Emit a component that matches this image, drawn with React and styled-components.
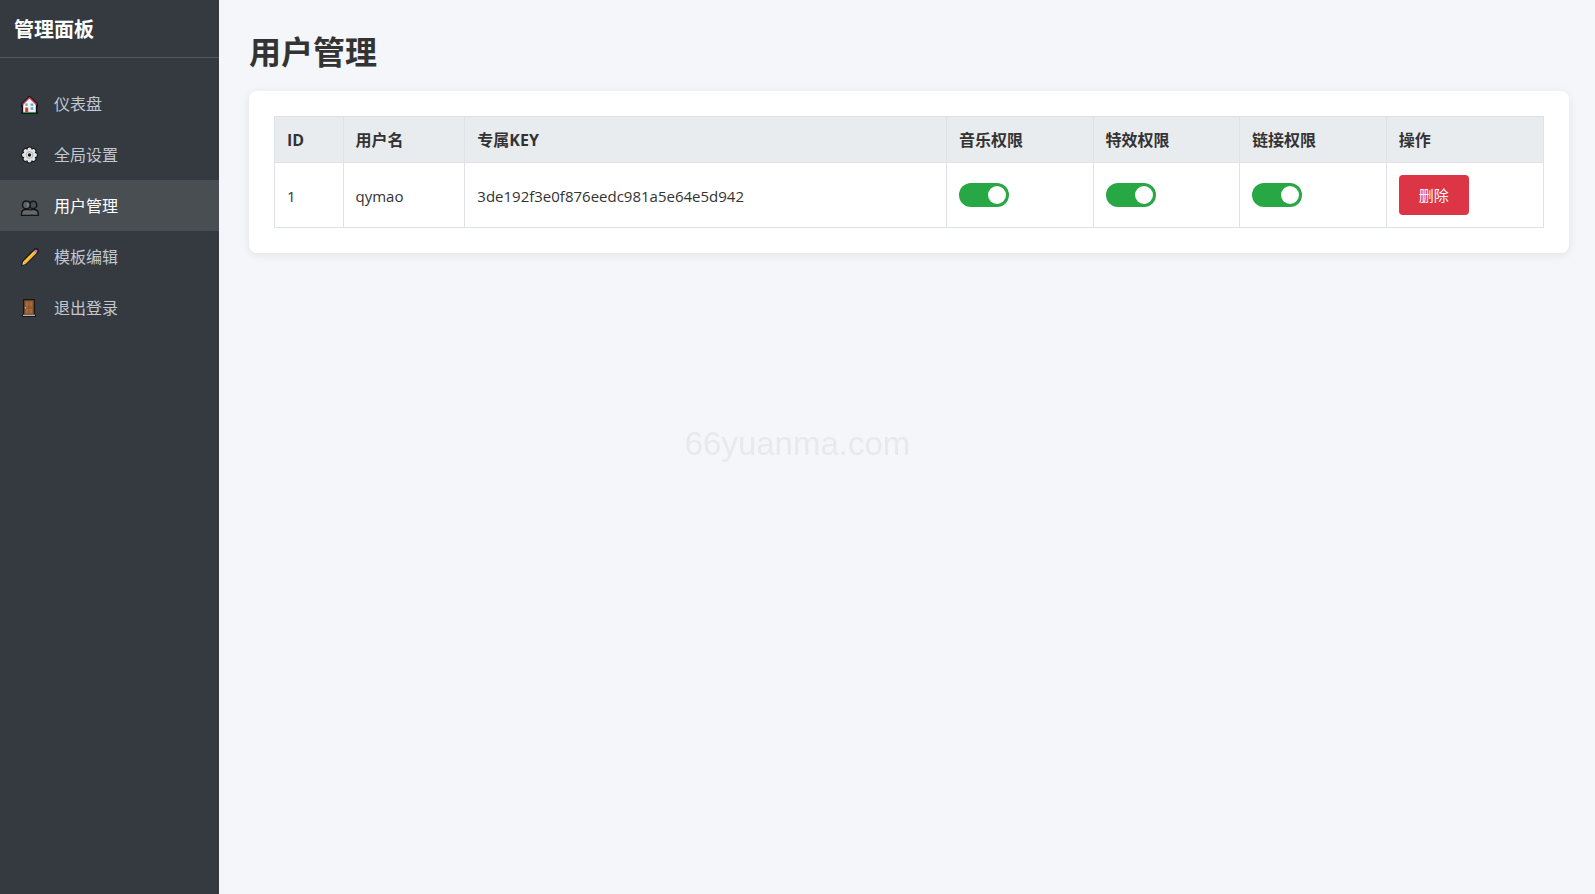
import React, { useState } from "react";
import styled, { createGlobalStyle } from "styled-components";

const NAV_ITEMS = [
  { id: "dashboard", label: "仪表盘", icon: HouseIcon },
  { id: "settings", label: "全局设置", icon: GearIcon },
  { id: "users", label: "用户管理", icon: UsersIcon },
  { id: "templates", label: "模板编辑", icon: PencilIcon },
  { id: "logout", label: "退出登录", icon: DoorIcon },
];

const PERMISSIONS = [
  { key: "music", label: "音乐权限" },
  { key: "effects", label: "特效权限" },
  { key: "links", label: "链接权限" },
];

const USERS = [
  {
    id: 1,
    name: "qymao",
    key: "3de192f3e0f876eedc981a5e64e5d942",
    music: true,
    effects: true,
    links: true,
  },
];

function App() {
  return (
    <>
      <GlobalStyle />
      <Page>
        <Sidebar active="users" />
        <Main>
          <Title>用户管理</Title>
          <Card>
            <UserTable users={USERS} />
          </Card>
        </Main>
        <Watermark>66yuanma.com</Watermark>
      </Page>
    </>
  );
}

function Sidebar(props) {
  const { active } = props;

  return (
    <Aside>
      <Brand>管理面板</Brand>
      <Nav>
        {NAV_ITEMS.map(({ id, label, icon: Icon }) => (
          <NavLink key={id} href={`#${id}`} $active={id === active}>
            <Icon />
            <NavLabel>{label}</NavLabel>
          </NavLink>
        ))}
      </Nav>
    </Aside>
  );
}

function UserTable(props) {
  const { users } = props;

  return (
    <Table>
      <colgroup>
        <Col $width="5.4%" />
        <Col $width="9.6%" />
        <Col />
        {PERMISSIONS.map(({ key }) => (
          <Col key={key} $width="11.55%" />
        ))}
        <Col $width="12.4%" />
      </colgroup>
      <thead>
        <tr>
          <HeadCell>
            <Latin $size={16}>ID</Latin>
          </HeadCell>
          <HeadCell>用户名</HeadCell>
          <HeadCell>
            专属<Latin $size={16}>KEY</Latin>
          </HeadCell>
          {PERMISSIONS.map(({ key, label }) => (
            <HeadCell key={key}>{label}</HeadCell>
          ))}
          <HeadCell>操作</HeadCell>
        </tr>
      </thead>
      <tbody>
        {users.map((user) => (
          <tr key={user.id}>
            <Cell>
              <Latin>{user.id}</Latin>
            </Cell>
            <Cell>
              <Latin>{user.name}</Latin>
            </Cell>
            <Cell>
              <Latin>{user.key}</Latin>
            </Cell>
            {PERMISSIONS.map(({ key, label }) => (
              <Cell key={key}>
                <PermissionSwitch label={label} initial={user[key]} />
              </Cell>
            ))}
            <Cell>
              <DeleteButton type="button">删除</DeleteButton>
            </Cell>
          </tr>
        ))}
      </tbody>
    </Table>
  );
}

function PermissionSwitch(props) {
  const { label, initial } = props;
  const [on, setOn] = useState(initial);

  return (
    <Switch
      type="checkbox"
      role="switch"
      aria-label={label}
      checked={on}
      onChange={(e) => setOn(e.target.checked)}
    />
  );
}

function HouseIcon() {
  return (
    <Icon viewBox="0 0 20 20" aria-hidden="true">
      <path d="M9.5 1.5 1 9.5v3.500h.6V18H1v2h17v-2h-.6v-5h.6V9.500z" fill="#15171a" />
      <path d="M3.2 10.5 9.5 4.3l6.300 6.200V18H3.200z" fill="#f3f5f5" />
      <path d="M2.4 10.5 9.5 3.6l7.100 6.900" fill="none" stroke="#d8394b" strokeWidth="1.1" />
      <path d="M3 18.4h13" stroke="#34a853" strokeWidth="1" />
      <path d="M5.2 13.5h3V18h-3z" fill="#d13a35" />
      <path d="M5.3 9.5h2.400v2.200H5.300zM10.600 9.500h2.700v2.200h-2.700zM10.600 13.300h2.700v2.500h-2.700z" fill="#56a9cf" />
    </Icon>
  );
}

function GearIcon() {
  return (
    <Icon viewBox="0 0 20 20" aria-hidden="true">
      <g stroke="#15171a" strokeWidth="6" strokeLinecap="round">
        <path d="M9.5 4.500v11M4 10h11M5.600 6.100l7.800 7.800M13.400 6.100l-7.800 7.800" />
      </g>
      <g stroke="#e3e4e6" strokeWidth="4" strokeLinecap="round">
        <path d="M9.500 4.500v11M4 10h11M5.600 6.100l7.800 7.800M13.400 6.100l-7.800 7.800" />
      </g>
      <circle cx="9.5" cy="10" r="5.8" fill="#e3e4e6" />
      <circle cx="9.5" cy="10" r="3.4" fill="none" stroke="#a9acaf" strokeWidth=".9" />
      <circle cx="9.5" cy="10" r="1.7" fill="#15171a" />
    </Icon>
  );
}

function UsersIcon() {
  return (
    <Icon viewBox="0 0 20 20" aria-hidden="true">
      <g stroke="#131517" strokeWidth="1.5">
        <path d="M9.5 19.200v-1.500c0-2.700 1.500-4.100 3.900-4.100 3 0 4.900 1.600 4.900 4.200v1.400z" fill="#55585a" />
        <circle cx="13.1" cy="8.9" r="3.7" fill="#4b4e50" />
        <path d="M1.600 19.200v-1.600c0-2.500 1.800-4 4.800-4s5.100 1.500 5.100 4v1.600z" fill="#686b6d" />
        <circle cx="6.4" cy="8.900" r="3.9" fill="#606365" />
      </g>
      <path d="M2.500 17.500c.3-2 1.700-2.900 4-2.900h7c2 0 3.500.9 3.800 2.900v1h-14.800z" fill="#66696b" />
      <path d="M7.200 7.200c1.200.8 1.300 2.200.3 3.200" fill="none" stroke="#9b9ea0" />
    </Icon>
  );
}

function PencilIcon() {
  return (
    <Icon viewBox="0 0 20 20" aria-hidden="true">
      <path d="M1 19.300l1.300-5.600L14.100 1.900c1.300-1.200 2.700-1 3.900.1s1.200 2.700 0 3.900L6.400 17.500z" fill="#15171a" />
      <path d="M3.200 14.600 13.300 4.500l2.400 2.400L5.600 17z" fill="#fbb723" />
      <path d="M4.100 15.300 14.200 5.200" stroke="#ffd45c" strokeWidth="1" />
      <path d="M3.200 14.600l2.400 2.400-3.300.9z" fill="#f1d0a5" />
      <path d="M13.300 4.500l.8-.8 2.400 2.400-.8.800z" fill="#d5d8da" />
      <path d="M14.100 3.700l.9-.8c.7-.6 1.500-.5 2.100.1s.6 1.500 0 2.100l-.6 1z" fill="#ee6983" />
    </Icon>
  );
}

function DoorIcon() {
  return (
    <Icon viewBox="0 0 20 20" aria-hidden="true">
      <path d="M3 1h12v15.600h1V19H2v-2.400h1z" fill="#15171a" />
      <path d="M4.300 2.300h9.400v14.200H4.300z" fill="#8f5a31" />
      <path d="M6 4h2.300v4.500H6zM9.700 4H12v4.500H9.700zM6 10.700h2.300V15H6zM9.700 10.700H12V15H9.700z" fill="#a56c40" />
      <circle cx="5.600" cy="9.700" r=".7" fill="#f5c451" />
      <path d="M3 17.300h12" stroke="#cfc3b8" strokeWidth="1.200" />
    </Icon>
  );
}

const GlobalStyle = createGlobalStyle`
  * {
    box-sizing: border-box;
  }

  body {
    margin: 0;
    background: #f4f6f9;
    color: #333;
    font-family: "Noto Sans CJK SC", "Open Sans", sans-serif;
    font-size: 16px;
  }
`;

const Page = styled.div`
  display: flex;
  min-height: 100vh;
`;

const Aside = styled.aside`
  flex: 0 0 219px;
  background: #343a40;
`;

const Brand = styled.div`
  padding: 15px 14px 14px;
  border-bottom: 1px solid #4f5962;
  color: #fff;
  font-size: 20px;
  font-weight: 700;
  line-height: 28px;
`;

const Nav = styled.nav`
  display: flex;
  flex-direction: column;
  padding-top: 20px;
`;

const NavLink = styled.a`
  display: flex;
  align-items: center;
  gap: 14px;
  height: 51px;
  padding: 0 20px;
  background: ${(props) => (props.$active ? "#494e53" : "transparent")};
  color: ${(props) => (props.$active ? "#fff" : "#c2c7d0")};
  text-decoration: none;
`;

const NavLabel = styled.span`
  padding-bottom: 2px;
`;

const Icon = styled.svg`
  flex: none;
  width: 20px;
  height: 20px;
`;

const Main = styled.main`
  flex: 1;
  min-width: 0;
  padding: 28px 26px 30px 30px;
`;

const Title = styled.h1`
  margin: 0 0 19px;
  font-size: 32px;
  font-weight: 700;
  line-height: 44px;
`;

const Card = styled.section`
  padding: 25px;
  border-radius: 8px;
  background: #fff;
  box-shadow: 0 2px 10px rgba(0, 0, 0, 0.08);
`;

const Table = styled.table`
  width: 100%;
  border-collapse: collapse;
  table-layout: fixed;
`;

const Col = styled.col`
  width: ${(props) => props.$width || "auto"};
`;

const Cell = styled.td`
  padding: 12px;
  border: 1px solid #dee2e6;
  line-height: 22px;
  text-align: left;
  vertical-align: middle;
`;

const HeadCell = styled(Cell).attrs({ as: "th", scope: "col" })`
  padding: 11px 12px 12px;
  background: #e9ecef;
  font-weight: 700;
`;

const Latin = styled.span`
  font-family: "Open Sans", sans-serif;
  font-size: ${(props) => props.$size || 15}px;
  line-height: 16px;
`;

const Switch = styled.input`
  appearance: none;
  display: flex;
  align-items: center;
  width: 50px;
  height: 24px;
  margin: 0;
  padding: 3px;
  border-radius: 12px;
  background: #ccc;
  cursor: pointer;

  &::before {
    content: "";
    width: 18px;
    height: 18px;
    border-radius: 50%;
    background: #fff;
  }

  &:checked {
    justify-content: flex-end;
    background: #28a745;
  }
`;

const DeleteButton = styled.button`
  display: block;
  height: 40px;
  padding: 0 20px 2px;
  border: none;
  border-radius: 4px;
  background: #dc3545;
  color: #fff;
  font-family: inherit;
  font-size: 15px;
  cursor: pointer;
`;

const Watermark = styled.div`
  position: fixed;
  inset: 0;
  display: flex;
  align-items: center;
  justify-content: center;
  padding-bottom: 6px;
  color: #e7e9ec;
  font-family: "Liberation Sans", Arial, sans-serif;
  font-size: 33px;
  pointer-events: none;
`;

export default App;
